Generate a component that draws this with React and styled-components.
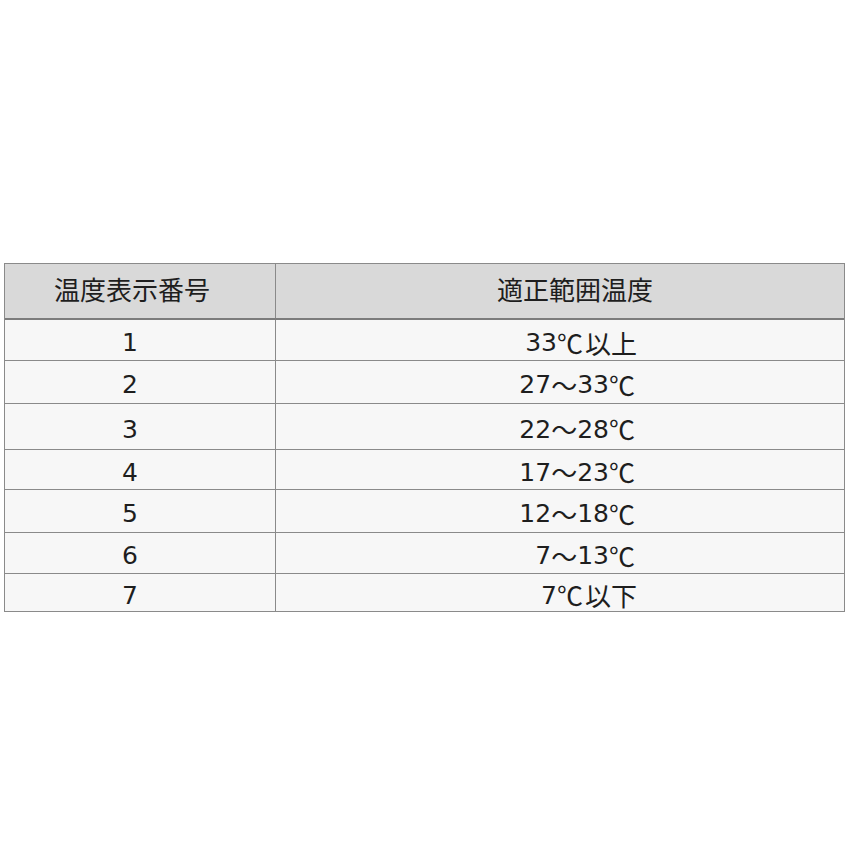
import React from "react";
import styled, { createGlobalStyle } from "styled-components";

const Global = createGlobalStyle`
  html, body { margin: 0; padding: 0; background: #ffffff; }
  body { font-family: "DejaVu Sans", "Noto Sans CJK JP", sans-serif; color: #1e1e1e; }
`;

const Page = styled.div`
  padding: 263px 0 0 4px;
`;

const Table = styled.div`
  width: 841px;
  box-sizing: border-box;
  border: 1px solid #8a8a8a;
`;

const Row = styled.div`
  display: grid;
  grid-template-columns: 271px 1fr;
  box-sizing: border-box;
  height: ${(p) => p.$h}px;
  background: ${(p) => (p.$head ? "#d9d9d9" : "#f7f7f7")};
  border-bottom: ${(p) => (p.$last ? "none" : p.$head ? "2px solid #7c7c7c" : "1px solid #8a8a8a")};
`;

const NumCell = styled.div`
  display: flex;
  align-items: center;
  justify-content: center;
  border-right: 1px solid #8a8a8a;
  padding: ${(p) => (p.$head ? "0 16px 0 0" : "5px 20px 0 0")};
  font-size: ${(p) => (p.$head ? "26px" : "25px")};
  line-height: 1;
`;

const RangeCell = styled.div`
  display: flex;
  align-items: center;
  justify-content: ${(p) => (p.$head ? "center" : "flex-end")};
  padding: ${(p) => (p.$head ? "0 0 0 30px" : "5px 207px 0 0")};
  font-size: ${(p) => (p.$head ? "26px" : "25px")};
  line-height: 1;
  white-space: pre;
`;

const Wide = styled.span`
  font-family: "Noto Sans CJK JP", sans-serif;
  font-size: 26px;
  margin-right: ${(p) => (p.$deg ? "2px" : "0")};
`;

function Range({ text }) {
  const parts = text.split(/([℃～以上下])/);
  return parts.map((p, i) =>
    /^[℃～以上下]$/.test(p) ? (
      <Wide key={i} $deg={p === "℃"}>{p}</Wide>
    ) : (
      <React.Fragment key={i}>{p}</React.Fragment>
    )
  );
}

const rows = [
  { n: "1", r: "33℃以上", h: 41 },
  { n: "2", r: "27～33℃", h: 43 },
  { n: "3", r: "22～28℃", h: 46 },
  { n: "4", r: "17～23℃", h: 40 },
  { n: "5", r: "12～18℃", h: 43 },
  { n: "6", r: "7～13℃", h: 41 },
  { n: "7", r: "7℃以下", h: 37 },
];

export default function App() {
  return (
    <Page>
      <Global />
      <Table>
        <Row $head $h={56}>
          <NumCell $head>温度表示番号</NumCell>
          <RangeCell $head>適正範囲温度</RangeCell>
        </Row>
        {rows.map((row, i) => (
          <Row key={row.n} $h={row.h} $last={i === rows.length - 1}>
            <NumCell>{row.n}</NumCell>
            <RangeCell>
              <Range text={row.r} />
            </RangeCell>
          </Row>
        ))}
      </Table>
    </Page>
  );
}
